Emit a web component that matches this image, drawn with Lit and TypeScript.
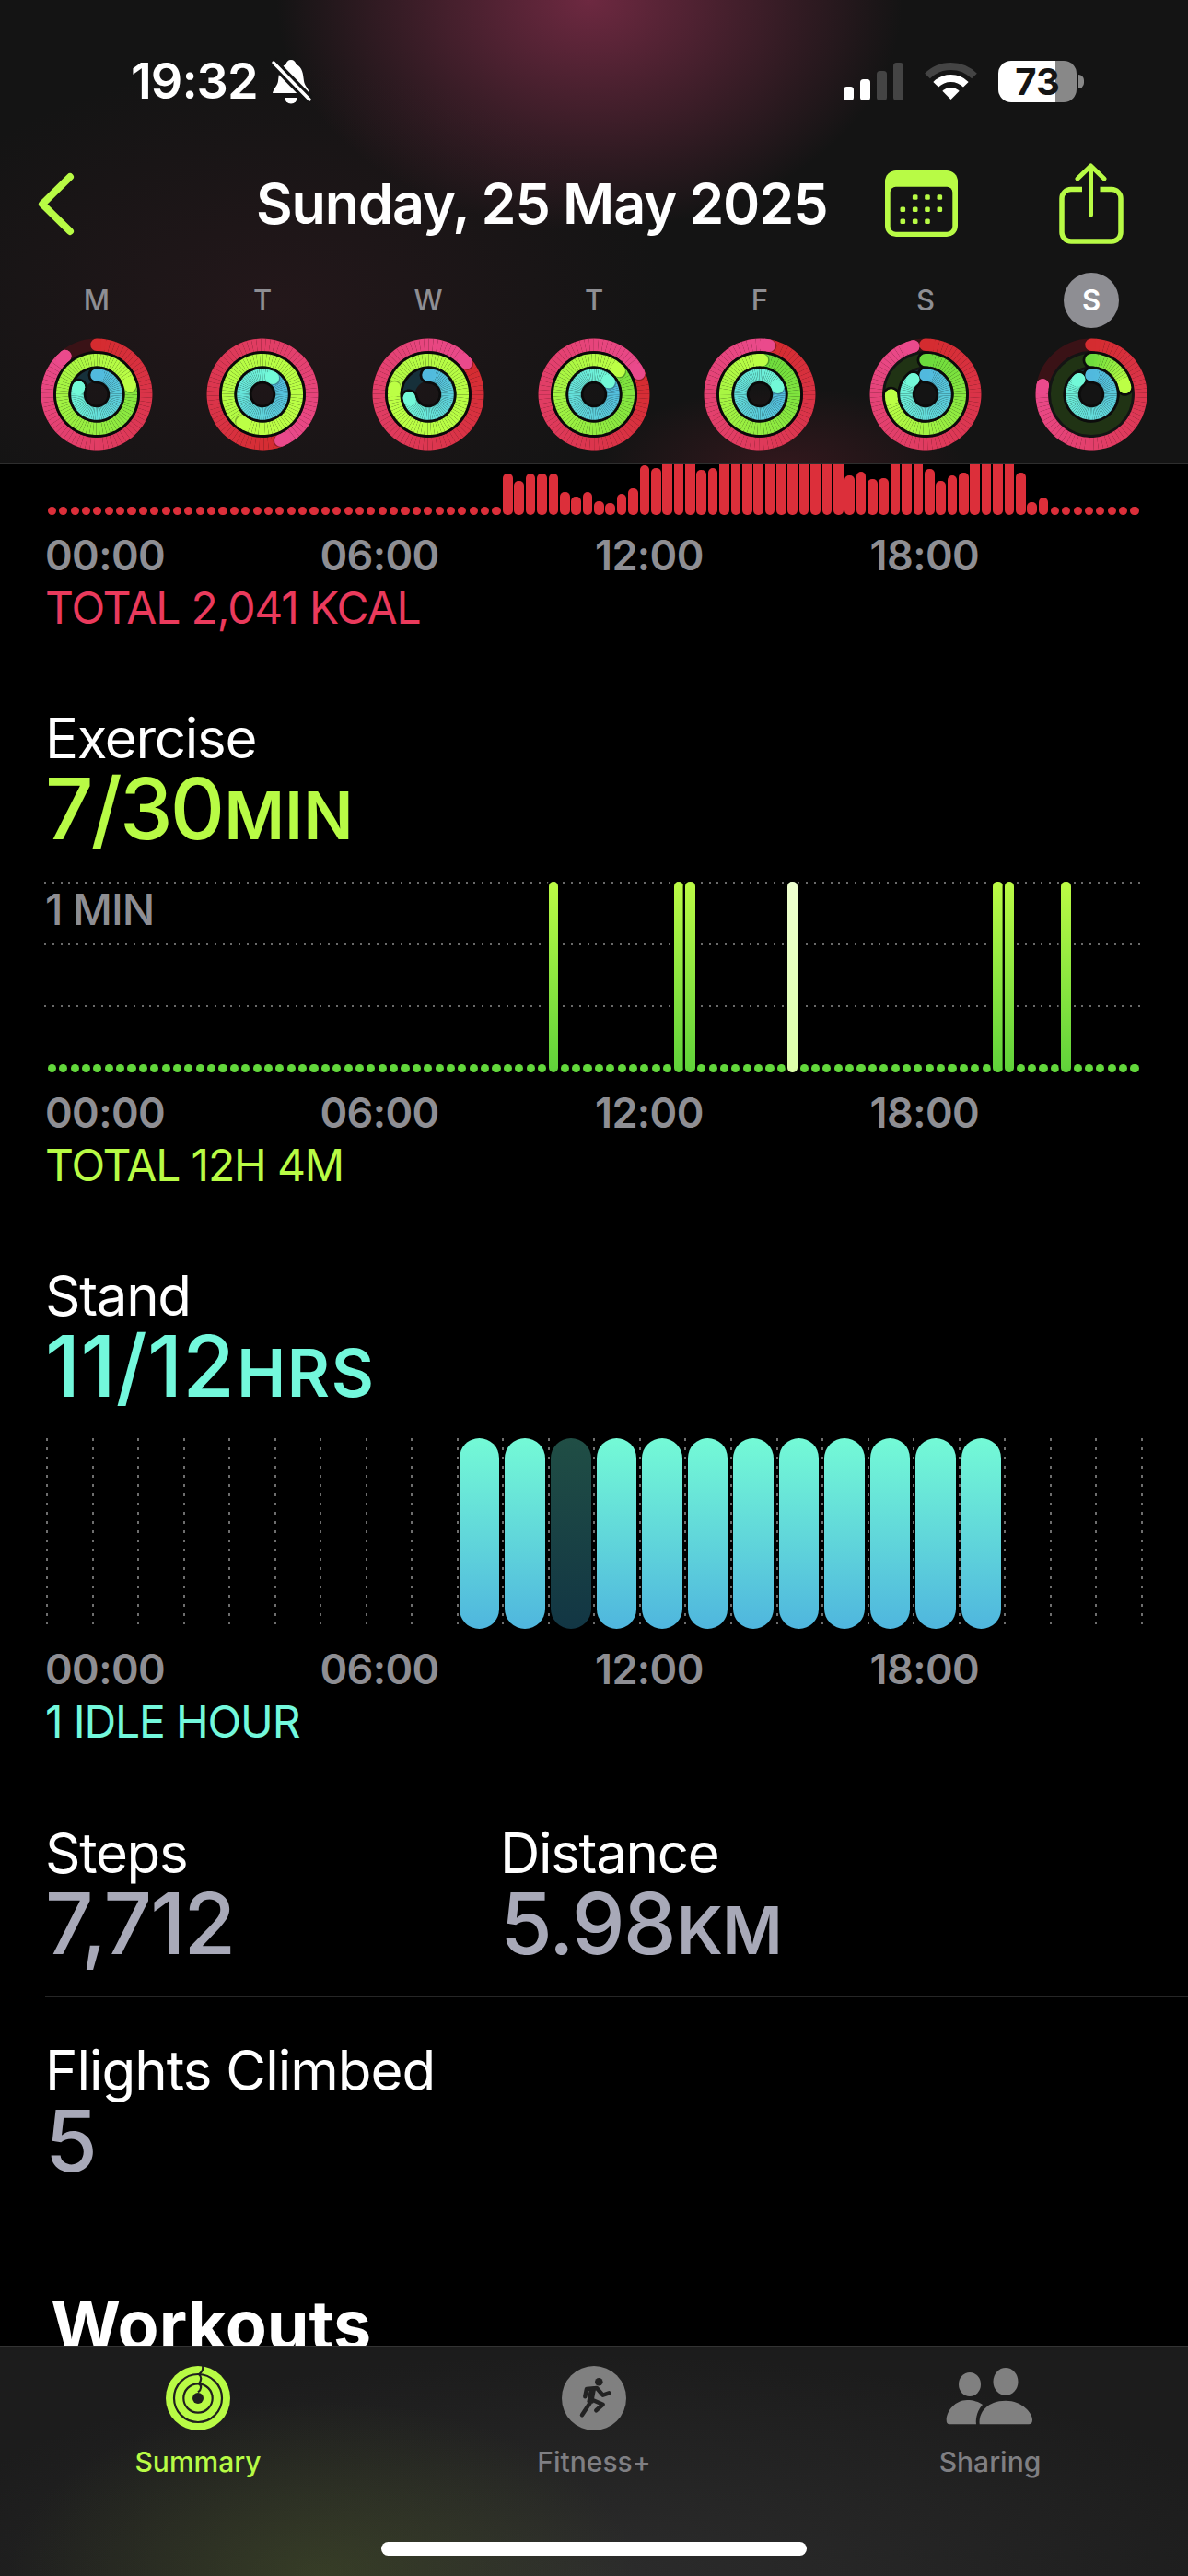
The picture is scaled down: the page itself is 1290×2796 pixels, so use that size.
import { LitElement, html, css, svg } from 'lit';
import { customElement } from 'lit/decorators.js';

type Rgb = [number, number, number];

const RINGS: { r: number; track: string; from: Rgb; to: Rgb }[] = [
  { r: 53.7, track: '#3a1216', from: [212, 43, 46], to: [234, 74, 140] },
  { r: 37.3, track: '#203314', from: [106, 218, 60], to: [188, 255, 69] },
  { r: 21, track: '#16303a', from: [80, 184, 222], to: [114, 249, 216] }
];

const polar = (r: number, turns: number) => {
  const a = turns * Math.PI * 2;
  return [61 + r * Math.sin(a), 61 - r * Math.cos(a)];
};

@customElement('activity-ring')
export class ActivityRing extends LitElement {
  declare values: number[];

  static override properties = {
    values: { type: Array }
  };

  constructor() {
    super();
    this.values = [0, 0, 0];
  }

  static override styles = css`
    :host { display: block; width: 122px; height: 122px; }
    svg { display: block; }
  `;

  private renderRing(index: number) {
    const ring = RINGS[index];
    const end = this.values[index];
    const start = Math.max(0, end - 1);
    const parts = [];
    const steps = Math.ceil((end - start) * 72);
    const halo = index === 0 ? null : end >= 1
      ? svg`<circle cx="61" cy="61" r=${ring.r} fill="none" stroke="#0a0a0a" stroke-width="19"></circle>`
      : (() => {
          const [x0, y0] = polar(ring.r, 0);
          const [x1, y1] = polar(ring.r, end);
          return svg`<path d="M${x0} ${y0}A${ring.r} ${ring.r} 0 ${end > 0.5 ? 1 : 0} 1 ${x1} ${y1}" fill="none" stroke="#0c0c0c" stroke-width="19" stroke-linecap="round"></path>`;
        })();

    // the green ring gets paler the further it has gone past its goal
    const floor = index === 1 && end > 1 ? Math.min(0.9, (end - 1) * 1.5) : 0;

    for (let i = 0; i < steps; i++) {
      const a = start + ((end - start) * i) / steps;
      const b = start + ((end - start) * (i + 1)) / steps;
      const t = floor + ((1 - floor) * (i + 1)) / steps;
      const c = ring.from.map((v, k) => Math.round(v + (ring.to[k] - v) * t));
      const [x0, y0] = polar(ring.r, a);
      const [x1, y1] = polar(ring.r, b);
      parts.push(svg`<path d="M${x0} ${y0}A${ring.r} ${ring.r} 0 0 1 ${x1} ${y1}" fill="none" stroke="rgb(${c.join(',')})" stroke-width="13.5" stroke-linecap=${i === 0 || i === steps - 1 ? 'round' : 'butt'}></path>`);
    }

    const [hx, hy] = polar(ring.r, end);
    const [sx, sy] = polar(ring.r, end + 1.6 / (ring.r * 6.28));
    return svg`
      <circle cx="61" cy="61" r=${ring.r} fill="none" stroke=${ring.track} stroke-width="13.5"></circle>
      ${halo}
      ${parts}
      ${end > 1 ? svg`<circle cx=${sx} cy=${sy} r="6.75" fill="#000" opacity="0.3"></circle>` : null}
      <circle cx=${hx} cy=${hy} r="6.75" fill="rgb(${ring.to.join(',')})"></circle>
    `;
  }

  override render() {
    return html`<svg width="122" height="122" viewBox="0 0 122 122">
      ${[0, 1, 2].map((i) => this.renderRing(i))}
    </svg>`;
  }
}

const DAYS: { label: string; rings: number[] }[] = [
  { label: 'M', rings: [0.89, 1.21, 0.81] },
  { label: 'T', rings: [1.44, 1.6, 1.09] },
  { label: 'W', rings: [1.14, 1.78, 0.72] },
  { label: 'T', rings: [1.18, 1.13, 1.14] },
  { label: 'F', rings: [1.03, 1.01, 1.19] },
  { label: 'S', rings: [0.96, 0.745, 0.89] },
  { label: 'S', rings: [0.78, 0.217, 0.89] }
];

// bar tops as read off the chart, 0 means it runs under the header
const MOVE_TOPS = [72, 95, 70, 70, 70, 130, 145, 132, 162, 168, 138, 120, 44, 52, 0, 0, 0, 60, 52,
  0, 0, 0, 0, 0, 0, 0, 0, 0, 0, 0, 78, 65, 90, 85, 0, 0, 0, 57, 95, 78, 68, 0, 0, 0, 0, 68, 165, 150];

const moveHeight = (i: number) => {
  if (i < 40 || i > 87) return 9;
  const top = MOVE_TOPS[i - 40];
  return top === 0 ? 70 : (206 - top) / 3;
};

const EXERCISE_BARS = [44, 55, 56, 65, 83, 84, 89];
const QUARTERS = Array.from({ length: 96 }, (_, i) => i);
const HOURS = Array.from({ length: 24 }, (_, i) => i);

@customElement('app-root')
export class AppRoot extends LitElement {
  static override styles = css`
    :host {
      display: block;
      width: 1290px;
      height: 2796px;
      background: #000;
      font-family: Inter, 'Noto Sans', sans-serif;
      color: #fff;
    }

    .screen {
      display: flex;
      flex-direction: column;
      width: 1290px;
      height: 2796px;
      overflow: hidden;
    }

    /* header */
    .header {
      flex: none;
      box-sizing: border-box;
      height: 504px;
      border-bottom: 1px solid #2e2e2e;
      background:
        radial-gradient(ellipse 340px 250px at 640px 0, rgba(124, 44, 72, 0.86), rgba(124, 44, 72, 0) 100%),
        radial-gradient(ellipse 420px 260px at 300px 330px, rgba(70, 30, 40, 0.3), rgba(70, 30, 40, 0) 100%),
        radial-gradient(ellipse 200px 90px at 850px 510px, rgba(110, 30, 45, 0.35), rgba(110, 30, 45, 0) 100%),
        #141414;
    }

    .status {
      display: flex;
      align-items: center;
      height: 60px;
      padding: 58px 0 0 142px;
    }

    .time {
      font-size: 54px;
      font-weight: 600;
      letter-spacing: -1px;
      line-height: 60px;
    }

    .bell { margin-left: 12px; }
    .signal { margin-left: auto; }
    .wifi { margin-left: 23px; }

    .battery {
      display: flex;
      align-items: center;
      justify-content: center;
      width: 85px;
      height: 45px;
      margin-left: 23px;
      border-radius: 14px;
      background: linear-gradient(90deg, #fff 73%, #888 73%);
      color: #141414;
      font-size: 40px;
      font-weight: 700;
      line-height: 45px;
    }

    .nub {
      width: 6px;
      height: 15px;
      margin: 0 113px 0 2px;
      border-radius: 0 6px 6px 0;
      background: #888;
    }

    .nav {
      display: flex;
      align-items: center;
      height: 88px;
      margin-top: 59px;
      padding-left: 41px;
    }

    .title {
      margin-left: 197px;
      font-size: 61px;
      font-weight: 600;
      letter-spacing: -1.1px;
      white-space: nowrap;
    }

    .calendar { margin-left: auto; }
    .share { margin: 0 70px 0 110px; }

    .days {
      display: grid;
      grid-template-columns: repeat(7, 180px);
      margin-top: 31px;
      padding-left: 15px;
    }

    .day {
      display: flex;
      flex-direction: column;
      align-items: center;
      gap: 11px;
    }

    .letter {
      width: 60px;
      height: 60px;
      border-radius: 50%;
      color: #8e8e93;
      font-size: 31px;
      font-weight: 500;
      line-height: 60px;
      text-align: center;
    }

    .letter--today {
      background: #8e8e93;
      color: #fff;
      font-weight: 600;
    }

    /* scrolled content */
    .content {
      flex: 1;
      min-height: 0;
      overflow: hidden;
    }

    .bars {
      display: flex;
      align-items: flex-end;
      padding-left: 50.2px;
    }

    .bar {
      flex: none;
      width: 9.2px;
      margin: 0 1.6px;
      border-radius: 5px;
    }

    .bar--wide {
      width: 10.6px;
      margin: 0 0.9px;
    }

    .bars--move {
      height: 55px;
      overflow: hidden;
    }

    .bars--move .bar { background: #dc2f3a; }
    .bar--dot { background: #63d83c; }

    .bar--tall {
      background: linear-gradient(#bcfb45, #5fd23a);
      box-shadow: 0 0 0 2.4px #000;
    }

    .bar--pale {
      background: linear-gradient(#eeffd0, #dcffa8);
    }

    .axis {
      display: grid;
      grid-template-columns: repeat(4, 298.5px);
      margin-top: 15px;
      padding-left: 49px;
      color: #8e8e93;
      font-size: 45px;
      font-weight: 600;
      letter-spacing: -0.6px;
      line-height: 58px;
    }

    .note {
      padding: 2px 0 0 49px;
      font-size: 48px;
      letter-spacing: -1.15px;
      line-height: 52px;
    }

    .note--move { color: #ea3a5c; }
    .note--exercise { color: #b8fb45; }
    .note--stand { color: #73f8dc; }

    .section {
      margin-top: 80.2px;
      padding-left: 49px;
    }

    .name {
      font-size: 60px;
      letter-spacing: -1.3px;
      line-height: 70px;
    }

    .value {
      font-size: 92px;
      font-weight: 500;
      letter-spacing: -1.4px;
      line-height: 84px;
      white-space: nowrap;
    }

    .value span {
      margin-left: 2px;
      font-size: 71px;
      font-weight: 600;
      letter-spacing: 0.4px;
      line-height: 0;
    }

    .value--exercise {
      color: #b8fb45;
      letter-spacing: -2.8px;
    }

    .value--stand {
      color: #73f8dc;
      letter-spacing: 0.2px;
    }

    .value--stand span { letter-spacing: 1.6px; }

    .value--plain {
      color: #a8a9b8;
      letter-spacing: -1.9px;
    }

    .value--plain span { letter-spacing: -0.6px; }

    .stack {
      display: grid;
      margin-top: 36px;
    }

    .stack > * { grid-area: 1 / 1; }

    .stack--exercise { height: 207.5px; }

    .hlines {
      display: flex;
      flex-direction: column;
      gap: 65.2px;
      margin: 0 50px 0 48px;
      padding-top: 0.7px;
    }

    .hline {
      height: 2px;
      background: repeating-linear-gradient(90deg, #6a6a6a 0 2px, transparent 2px 8.8px);
    }

    .one-min {
      align-self: start;
      padding: 5px 0 0 49px;
      color: #8e8e93;
      font-size: 47px;
      font-weight: 500;
      letter-spacing: -1px;
      line-height: 52px;
    }

    .stack--stand {
      height: 206.7px;
      padding-left: 50px;
    }

    .vlines {
      display: flex;
      justify-content: space-between;
      width: 1191px;
    }

    .vline {
      width: 2px;
      height: 202px;
      background: repeating-linear-gradient(180deg, #6e6e6e 0 3px, transparent 3px 10px);
    }

    .hours {
      display: grid;
      grid-template-columns: repeat(24, 49.56px);
    }

    .hour {
      margin: 0 3px;
      border-radius: 22px;
      background: linear-gradient(#74fad6, #4fb6de);
    }

    .hour--idle { background: linear-gradient(#204e45, #123644); }

    .metrics {
      display: grid;
      grid-template-columns: 494px 1fr;
      margin: 81.6px 0 0 49px;
      padding-bottom: 37px;
      border-bottom: 1px solid #262626;
    }

    .flights {
      margin-top: 44px;
      padding-left: 49px;
    }

    .flights .name { letter-spacing: -1px; }

    .workouts {
      margin-top: 113px;
      padding-left: 55px;
      font-size: 73.5px;
      font-weight: 700;
      line-height: 90px;
    }

    /* tab bar */
    .tabs {
      flex: none;
      box-sizing: border-box;
      height: 250px;
      border-top: 1px solid #333;
      background:
        radial-gradient(ellipse 340px 190px at 350px 100%, rgba(90, 110, 40, 0.32), rgba(90, 110, 40, 0) 100%),
        radial-gradient(ellipse 760px 240px at 645px 100%, #2c2c2c, rgba(44, 44, 44, 0) 100%),
        #1c1c1c;
    }

    .tab-row {
      display: grid;
      grid-template-columns: repeat(3, 430px);
      padding-top: 21px;
    }

    .tab {
      display: flex;
      flex-direction: column;
      align-items: center;
      color: #7f7f83;
      font-size: 30px;
      font-weight: 500;
      line-height: 40px;
    }

    .tab--active { color: #b8fb45; }

    .tab svg {
      display: block;
      margin-bottom: 14px;
    }

    .home {
      width: 462px;
      height: 15px;
      margin: 67px auto 0;
      border-radius: 8px;
      background: #fff;
    }
  `;

  private renderStatus() {
    return html`
      <div class="status">
        <span class="time">19:32</span>
        <svg class="bell" width="48" height="50" viewBox="0 0 48 50">
          <path d="M24 2c-3 0-5 2-5.600 5-7 3-7.400 10-8.400 18-.6 5-5 8-6 13h40c-1-5-5.400-8-6-13-1-8-1.400-15-8.400-18-.6-3-2.600-5-5.600-5z" fill="#fff"></path>
          <path d="M17 41a7 6.500 0 0 0 14 0z" fill="#fff" transform="translate(0 2)"></path>
          <path d="M3 3l41 42" stroke="#141414" stroke-width="10"></path>
          <path d="M5 5l39 40" stroke="#fff" stroke-width="3.500" stroke-linecap="round"></path>
        </svg>
        <svg class="signal" width="65" height="41" viewBox="0 0 65 41">
          <rect x="0" y="26" width="11" height="15" rx="3.500" fill="#fff"></rect>
          <rect x="18" y="18" width="11" height="23" rx="3.500" fill="#fff"></rect>
          <rect x="36" y="9" width="11" height="32" rx="3.500" fill="#444"></rect>
          <rect x="54" y="0" width="11" height="41" rx="3.500" fill="#444"></rect>
        </svg>
        <svg class="wifi" width="57" height="42" viewBox="0 0 57 42">
          <path d="M3 15.500A36 36 0 0 1 54 15.500" fill="none" stroke="#444" stroke-width="8"></path>
          <path d="M12.200 24.700A23 23 0 0 1 44.800 24.700" fill="none" stroke="#fff" stroke-width="8"></path>
          <path d="M28.500 41L19.300 31.800A13 13 0 0 1 37.700 31.800Z" fill="#fff"></path>
        </svg>
        <div class="battery">73</div>
        <div class="nub"></div>
      </div>
    `;
  }

  private renderNav() {
    const dots = [
      [32.7, 29], [46, 29], [59.3, 29],
      [19.3, 42.3], [32.7, 42.3], [46, 42.3], [59.3, 42.3],
      [19.3, 55.3], [32.7, 55.3], [46, 55.3]
    ];
    return html`
      <div class="nav">
        <svg width="40" height="69" viewBox="0 0 40 69">
          <path d="M35 5L5 34.500L35 64" fill="none" stroke="#b8fb45" stroke-width="8" stroke-linecap="round" stroke-linejoin="round"></path>
        </svg>
        <div class="title">Sunday, 25 May 2025</div>
        <svg class="calendar" width="79" height="72" viewBox="0 0 79 72">
          <rect width="79" height="72" rx="12" fill="#b8fb45"></rect>
          <rect x="5.700" y="17.700" width="67.600" height="49" rx="6" fill="#141414"></rect>
          ${dots.map(([x, y]) => svg`<rect x=${x - 2.8} y=${y - 2.8} width="5.600" height="5.600" rx="1.500" fill="#b8fb45"></rect>`)}
        </svg>
        <svg class="share" width="70" height="88" viewBox="0 0 70 88">
          <path d="M25 28.500H13a10 10 0 0 0-10 10V75a10 10 0 0 0 10 10H57a10 10 0 0 0 10-10V38.500a10 10 0 0 0-10-10H44.500" fill="none" stroke="#b8fb45" stroke-width="5.500"></path>
          <path d="M34.500 56V4M20 17L34.500 3L49 17" fill="none" stroke="#b8fb45" stroke-width="5" stroke-linecap="round" stroke-linejoin="round"></path>
        </svg>
      </div>
    `;
  }

  private renderAxis() {
    return html`<div class="axis"><span>00:00</span><span>06:00</span><span>12:00</span><span>18:00</span></div>`;
  }

  private renderTabs() {
    return html`
      <div class="tabs">
        <div class="tab-row">
          <div class="tab tab--active">
            <svg width="70" height="70" viewBox="0 0 70 70">
              <circle cx="35" cy="35" r="35" fill="#b8fb45"></circle>
              <circle cx="35" cy="35" r="26" fill="none" stroke="#1f1f1f" stroke-width="2.200"></circle>
              <circle cx="35" cy="35" r="15.700" fill="none" stroke="#1f1f1f" stroke-width="2.200"></circle>
              <circle cx="35" cy="35" r="6" fill="#1f1f1f"></circle>
              <path d="M40 0c1 4-1 7-4 9.200c3 2 3 6 0 10.200c3 2 3 6-1 9" fill="none" stroke="#1f1f1f" stroke-width="2.200"></path>
            </svg>
            Summary
          </div>
          <div class="tab">
            <svg width="70" height="70" viewBox="0 0 70 70">
              <circle cx="35" cy="35" r="35" fill="#808080"></circle>
              <circle cx="40.300" cy="17.300" r="4.300" fill="#222"></circle>
              <path d="M33.500 25L30.700 40" fill="none" stroke="#222" stroke-width="7"></path>
              <path d="M25.300 33.300L27 25L38 24L44.700 31.700L51.300 29.300M30.700 40L22 53.300M33 36.700L44.700 41.700L37.300 48.300" fill="none" stroke="#222" stroke-width="4.500" stroke-linecap="round" stroke-linejoin="round"></path>
            </svg>
            Fitness+
          </div>
          <div class="tab">
            <svg width="120" height="70" viewBox="0 15 120 70">
              <ellipse cx="38" cy="35" rx="12" ry="13" fill="#808080"></ellipse>
              <ellipse cx="77" cy="32" rx="13.500" ry="15" fill="#808080"></ellipse>
              <path d="M48.700 78.300C47 66 57 52.700 77 52.700C95 52.700 106 66 106 74C106 77 104 78.300 102 78.300Z" fill="#808080"></path>
              <path d="M12.700 74C12.700 63 23 52 35 52C42 52 48 54 52 57C47 62 44 71 45 78.300H16C14 78.300 12.700 77 12.700 74Z" fill="#808080"></path>
            </svg>
            Sharing
          </div>
        </div>
        <div class="home"></div>
      </div>
    `;
  }

  override render() {
    return html`
      <div class="screen">
        <div class="header">
          ${this.renderStatus()}
          ${this.renderNav()}
          <div class="days">
            ${DAYS.map((day, i) => html`
              <div class="day">
                <div class="letter ${i === 6 ? 'letter--today' : ''}">${day.label}</div>
                <activity-ring .values=${day.rings}></activity-ring>
              </div>
            `)}
          </div>
        </div>

        <div class="content">
          <div class="bars bars--move">
            ${QUARTERS.map((i) => {
              const h = moveHeight(i);
              return html`<div class="bar ${h > 9 ? 'bar--wide' : ''}" style="height:${h}px"></div>`;
            })}
          </div>
          ${this.renderAxis()}
          <div class="note note--move">TOTAL 2,041 KCAL</div>

          <div class="section">
            <div class="name">Exercise</div>
            <div class="value value--exercise">7/30<span>MIN</span></div>
          </div>
          <div class="stack stack--exercise">
            <div class="hlines">
              <div class="hline"></div>
              <div class="hline"></div>
              <div class="hline"></div>
            </div>
            <div class="one-min">1 MIN</div>
            <div class="bars">
              ${QUARTERS.map((i) => {
                if (!EXERCISE_BARS.includes(i)) return html`<div class="bar bar--dot" style="height:9px"></div>`;
                return html`<div class="bar bar--wide bar--tall ${i === 65 ? 'bar--pale' : ''}" style="height:207px"></div>`;
              })}
            </div>
          </div>
          ${this.renderAxis()}
          <div class="note note--exercise">TOTAL 12H 4M</div>

          <div class="section">
            <div class="name">Stand</div>
            <div class="value value--stand">11/12<span>HRS</span></div>
          </div>
          <div class="stack stack--stand">
            <div class="vlines">
              ${Array.from({ length: 25 }, () => html`<div class="vline"></div>`)}
            </div>
            <div class="hours">
              ${HOURS.map((h) => (h < 9 || h > 20
                ? html`<div></div>`
                : html`<div class="hour ${h === 11 ? 'hour--idle' : ''}"></div>`))}
            </div>
          </div>
          ${this.renderAxis()}
          <div class="note note--stand">1 IDLE HOUR</div>

          <div class="metrics">
            <div>
              <div class="name">Steps</div>
              <div class="value value--plain">7,712</div>
            </div>
            <div>
              <div class="name">Distance</div>
              <div class="value value--plain">5.98<span>KM</span></div>
            </div>
          </div>
          <div class="flights">
            <div class="name">Flights Climbed</div>
            <div class="value value--plain">5</div>
          </div>
          <div class="workouts">Workouts</div>
        </div>

        ${this.renderTabs()}
      </div>
    `;
  }
}
